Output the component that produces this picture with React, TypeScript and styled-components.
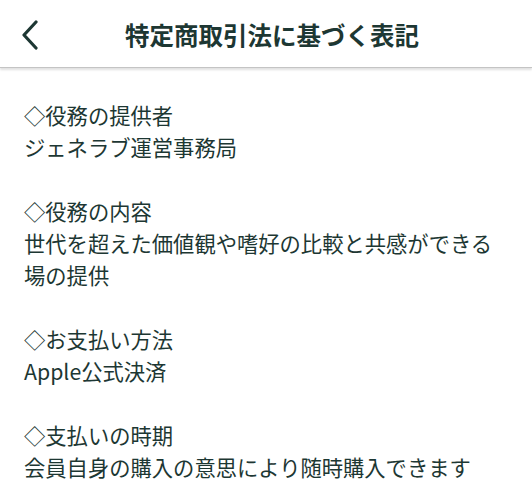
import React from "react";
import styled, { createGlobalStyle } from "styled-components";

const Global = createGlobalStyle`
  html, body { margin: 0; padding: 0; background: #ffffff; }
  body { font-family: "Noto Sans CJK JP", "Noto Sans", sans-serif; color: #1d3733; }
`;

const Page = styled.div`
  width: 532px;
  min-height: 503px;
  background: #fff;
`;

const Header = styled.header`
  position: relative;
  height: 67px;
  display: flex;
  align-items: center;
  justify-content: center;
  border-bottom: 1px solid #c4c4c4;
  box-shadow: 0 2px 2px rgba(0, 0, 0, 0.12);
`;

const BackButton = styled.button`
  position: absolute;
  left: 14px;
  top: 15px;
  width: 32px;
  height: 40px;
  padding: 0;
  border: none;
  background: none;
  display: flex;
  align-items: center;
  justify-content: center;
  color: #1d3733;
`;

const Title = styled.h1`
  margin: 0;
  font-size: 24.5px;
  font-weight: 700;
  color: #1d3733;
  transform: translate(6px, 1px);
`;

const Body = styled.main`
  padding: 31px 24px 0 24px;
`;

const Section = styled.section`
  margin-bottom: 32px;
`;

const Line = styled.p`
  margin: 0;
  font-size: 21.3px;
  line-height: 32px;
  color: #1d3733;
  white-space: nowrap;
`;

const sections: { heading: string; lines: string[] }[] = [
  { heading: "◇役務の提供者", lines: ["ジェネラブ運営事務局"] },
  {
    heading: "◇役務の内容",
    lines: ["世代を超えた価値観や嗜好の比較と共感ができる", "場の提供"],
  },
  { heading: "◇お支払い方法", lines: ["Apple公式決済"] },
  { heading: "◇支払いの時期", lines: ["会員自身の購入の意思により随時購入できます"] },
];

export default function App() {
  return (
    <Page>
      <Global />
      <Header>
        <BackButton aria-label="戻る">
          <svg width="20" height="30" viewBox="0 0 20 30" fill="none">
            <path
              d="M16 2 L4 15 L16 28"
              stroke="currentColor"
              strokeWidth="3.2"
              strokeLinecap="round"
              strokeLinejoin="round"
            />
          </svg>
        </BackButton>
        <Title>特定商取引法に基づく表記</Title>
      </Header>
      <Body>
        {sections.map((s) => (
          <Section key={s.heading}>
            <Line>{s.heading}</Line>
            {s.lines.map((l) => (
              <Line key={l}>{l}</Line>
            ))}
          </Section>
        ))}
      </Body>
    </Page>
  );
}
